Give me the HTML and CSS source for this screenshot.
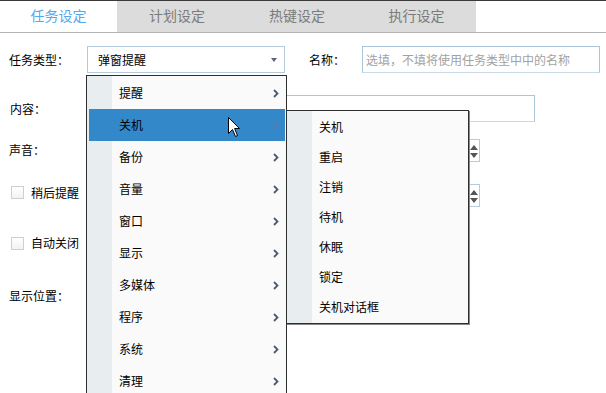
FILE: index.html
```html
<!DOCTYPE html>
<html lang="zh-CN">
<head>
<meta charset="utf-8">
<title>任务设定</title>
<link rel="stylesheet" href="styles.css">
</head>
<body>
<div class="window">
  <div class="tabs">
    <div class="tab active">任务设定</div>
    <div class="tab">计划设定</div>
    <div class="tab">热键设定</div>
    <div class="tab last">执行设定</div>
  </div>

  <div class="form">
    <div class="row r1">
      <span class="label">任务类型：</span>
      <div class="select">弹窗提醒<span class="caret"></span></div>
      <span class="label name-label">名称：</span>
      <div class="input name">选填，不填将使用任务类型中中的名称</div>
    </div>
    <div class="row r2">
      <span class="label">内容：</span>
      <div class="input content"></div>
    </div>
    <div class="row r3">
      <span class="label">声音：</span>
      <div class="spin"><span class="arrows"><span class="up"></span><span class="down"></span></span></div>
    </div>
    <div class="row r4">
      <span class="check"><span class="box"></span>稍后提醒</span>
      <div class="spin"><span class="arrows"><span class="up"></span><span class="down"></span></span></div>
    </div>
    <div class="row r5">
      <span class="check"><span class="box"></span>自动关闭</span>
    </div>
    <div class="row r6">
      <span class="label">显示位置：</span>
    </div>
  </div>

  <div class="menu main">
    <div class="item">提醒<svg class="chev" viewBox="0 0 6 9"><path d="M1 1 L4.5 4.5 L1 8"/></svg></div>
    <div class="item hot">关机<svg class="chev" viewBox="0 0 6 9"><path d="M1 1 L4.5 4.5 L1 8"/></svg></div>
    <div class="item">备份<svg class="chev" viewBox="0 0 6 9"><path d="M1 1 L4.5 4.5 L1 8"/></svg></div>
    <div class="item">音量<svg class="chev" viewBox="0 0 6 9"><path d="M1 1 L4.5 4.5 L1 8"/></svg></div>
    <div class="item">窗口<svg class="chev" viewBox="0 0 6 9"><path d="M1 1 L4.5 4.5 L1 8"/></svg></div>
    <div class="item">显示<svg class="chev" viewBox="0 0 6 9"><path d="M1 1 L4.5 4.5 L1 8"/></svg></div>
    <div class="item">多媒体<svg class="chev" viewBox="0 0 6 9"><path d="M1 1 L4.5 4.5 L1 8"/></svg></div>
    <div class="item">程序<svg class="chev" viewBox="0 0 6 9"><path d="M1 1 L4.5 4.5 L1 8"/></svg></div>
    <div class="item">系统<svg class="chev" viewBox="0 0 6 9"><path d="M1 1 L4.5 4.5 L1 8"/></svg></div>
    <div class="item">清理<svg class="chev" viewBox="0 0 6 9"><path d="M1 1 L4.5 4.5 L1 8"/></svg></div>
  </div>

  <div class="menu sub">
    <div class="item">关机</div>
    <div class="item">重启</div>
    <div class="item">注销</div>
    <div class="item">待机</div>
    <div class="item">休眠</div>
    <div class="item">锁定</div>
    <div class="item">关机对话框</div>
  </div>

  <svg class="cursor" viewBox="0 0 13 21" width="13" height="21">
    <path d="M0.5 0.5 L0.5 16.5 L4.5 12.5 L7.5 19.5 L9.5 18.5 L6.6 11.5 L11.5 11.5 Z" fill="#fff" stroke="#000" stroke-width="1" stroke-linejoin="miter"/>
  </svg>
</div>
</body>
</html>
```

FILE: styles.css
```css
* { box-sizing: border-box; }

html, body {
  margin: 0;
  padding: 0;
  background: #fff;
}

body {
  font-family: "Noto Sans CJK SC", "Noto Sans", sans-serif;
  font-size: 12px;
  color: #000;
}

.window {
  position: relative;
  width: 606px;
  height: 393px;
  overflow: hidden;
  border-top: 1px solid #3a3a3a;
}

/* tabs */
.tabs {
  display: flex;
  height: 32px;
  border-bottom: 1px solid #b4b4b4;
}

.tab {
  width: 120px;
  height: 31px;
  line-height: 29px;
  text-align: center;
  font-size: 14px;
  color: #7b7b7b;
  background: #dcdcdc;
}

.tab.active {
  width: 117px;
  background: #fff;
  color: #56a9ee;
}

.tab.last { width: 119px; }

/* form */
.form {
  display: flex;
  flex-direction: column;
  padding-left: 9px;
}

.row {
  display: flex;
  align-items: center;
}

.label {
  width: 78px;
  line-height: 16px;
}

.r1 { margin-top: 13px; height: 27px; }
.r2 { margin-top: 22px; height: 27px; }
.r3 { margin-top: 17px; height: 23px; }
.r4 { margin-top: 22px; height: 23px; }
.r5 { margin-top: 26px; height: 20px; }
.r6 { margin-top: 33px; height: 20px; }

.r2 .label { padding-left: 1px; }
.r3 .label { margin-top: -2px; }

.select {
  position: relative;
  width: 198px;
  height: 27px;
  border: 1px solid #b3cbdc;
  padding-left: 10px;
  line-height: 25px;
  background: #fff;
}

.caret {
  position: absolute;
  right: 7px;
  top: 11px;
  width: 0;
  height: 0;
  border-left: 3.5px solid transparent;
  border-right: 3.5px solid transparent;
  border-top: 4px solid #5a6678;
}

.name-label {
  width: 53px;
  margin-left: 24px;
}

.input {
  height: 27px;
  border: 1px solid #a9c6da;
  border-bottom-color: #c8dae6;
  background: #fff;
}

.input.name {
  width: 238px;
  padding-left: 3px;
  line-height: 25px;
  color: #a2a2a2;
  white-space: nowrap;
  overflow: hidden;
}

.input.content { width: 448px; }

.spin {
  position: relative;
  width: 393px;
  height: 23px;
  border: 1px solid #b3cbdc;
  background: #fff;
}

.arrows {
  position: absolute;
  right: 1px;
  top: 2px;
  width: 9px;
  height: 18px;
  display: flex;
  flex-direction: column;
  align-items: center;
  justify-content: space-between;
  padding: 3px 0 2px;
}

.up {
  width: 0; height: 0;
  border-left: 4.5px solid transparent;
  border-right: 4.5px solid transparent;
  border-bottom: 5px solid #555;
}

.down {
  width: 0; height: 0;
  border-left: 4.5px solid transparent;
  border-right: 4.5px solid transparent;
  border-top: 5px solid #555;
}

.check {
  display: flex;
  align-items: center;
  width: 78px;
  padding-left: 2px;
  gap: 7px;
  line-height: 16px;
}

.r4 .check { margin-top: -6px; }

.box {
  width: 13px;
  height: 13px;
  border: 1px solid #cfcfcf;
  background: linear-gradient(#fff, #f2f2f2);
}

/* popup menus */
.menu {
  position: absolute;
  border: 1px solid #2e2e2e;
  padding: 1px;
  background: linear-gradient(to right, #e8edef 0, #e8edef 25px, #fafafa 25px);
}

.menu.main {
  left: 86px;
  top: 74px;
  width: 201px;
}

.menu.sub {
  left: 286px;
  top: 109px;
  width: 183px;
  box-shadow: 1px 1px 0 #888;
}

.item {
  position: relative;
  height: 32px;
  line-height: 32px;
  padding-left: 31px;
}

.sub .item {
  height: 30px;
  line-height: 30px;
}

.item.hot {
  background: #3288c9;
  margin-left: 1px;
  padding-left: 30px;
}

.chev {
  position: absolute;
  right: 6px;
  top: 12px;
  width: 6px;
  height: 9px;
  fill: none;
  stroke: #4c5a78;
  stroke-width: 1.8;
}

.hot .chev { stroke: #62799e; }

.cursor {
  position: absolute;
  left: 228px;
  top: 116px;
}
```
